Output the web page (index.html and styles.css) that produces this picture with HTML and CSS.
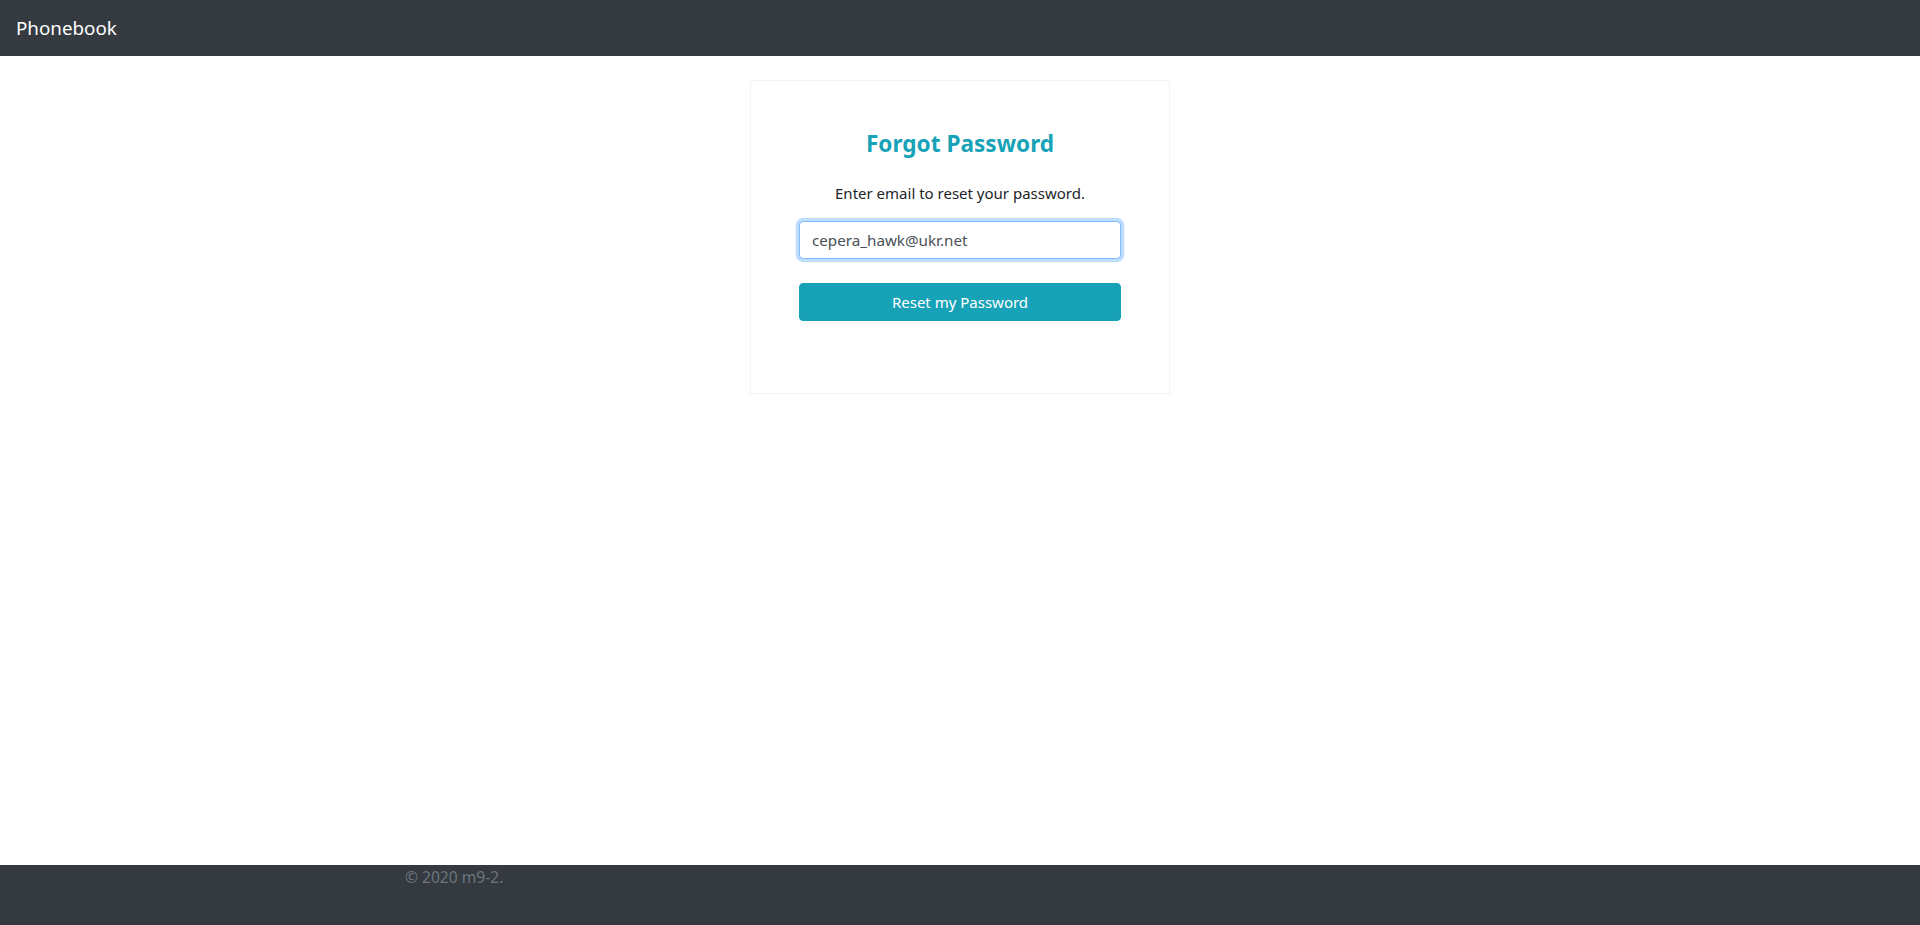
FILE: index.html
```html
<!DOCTYPE html>
<html lang="en">
<head>
<meta charset="utf-8">
<title>Forgot Password - Phonebook</title>
<link rel="stylesheet" href="styles.css">
</head>
<body>
  <nav class="navbar">
    <a class="brand" href="#">Phonebook</a>
  </nav>
  <main class="main">
    <div class="card">
      <h4 class="card-title">Forgot Password</h4>
      <p class="card-text">Enter email to reset your password.</p>
      <form class="form">
        <div class="form-group">
          <input class="form-control" type="email" value="cepera_hawk@ukr.net">
        </div>
        <button class="btn-info" type="button">Reset my Password</button>
      </form>
    </div>
  </main>
  <footer class="footer">
    <div class="container">
      <span class="muted">&copy; 2020 m9-2.</span>
    </div>
  </footer>
</body>
</html>
```

FILE: styles.css
```css
* { box-sizing: border-box; }
html, body { height: 100%; }
body {
  margin: 0;
  font-family: "Noto Sans", "Open Sans", sans-serif;
  font-size: 15px;
  line-height: 24px;
  color: #212529;
  background: #fff;
  display: flex;
  flex-direction: column;
  min-height: 100vh;
}
.navbar {
  background: #343a40;
  padding: 8px 16px;
  display: flex;
  align-items: center;
  height: 56px;
}
.brand {
  color: #fff;
  text-decoration: none;
  font-size: 18.8px;
  line-height: 30px;
  padding: 5px 0;
}
.main {
  flex: 1;
  display: flex;
  justify-content: center;
  align-items: flex-start;
  padding-top: 24px;
}
.card {
  width: 420px;
  border: 1px solid #f3f3f3;
  padding: 48px;
  text-align: center;
}
.card-title {
  margin: 0 0 24px;
  padding-top: 2px;
  font-size: 22.6px;
  font-weight: 700;
  line-height: 26px;
  color: #17a2b8;
}
.card-text {
  margin: 0 0 16px;
}
.form { margin: 0 0 24px; }
.form-group { margin-bottom: 24px; }
.form-control {
  display: block;
  width: 100%;
  height: 38px;
  padding: 6px 12px;
  font-family: inherit;
  font-size: 15.2px;
  line-height: 24px;
  color: #495057;
  background: #fff;
  border: 1px solid #80bdff;
  border-radius: 4px;
  outline: 0;
  box-shadow: 0 0 0 3.2px rgba(0, 123, 255, .25);
}
.btn-info {
  display: block;
  width: 100%;
  height: 38px;
  padding: 6px 12px;
  font-family: inherit;
  font-size: 15px;
  line-height: 24px;
  color: #fff;
  background: #17a2b8;
  border: 1px solid #17a2b8;
  border-radius: 4px;
  cursor: pointer;
}
.footer {
  background: #343a40;
  height: 60px;
}
.container {
  width: 1140px;
  margin: 0 auto;
  padding: 0 15px;
  font-size: 15.6px;
}
.muted { color: #6c757d; }
```
